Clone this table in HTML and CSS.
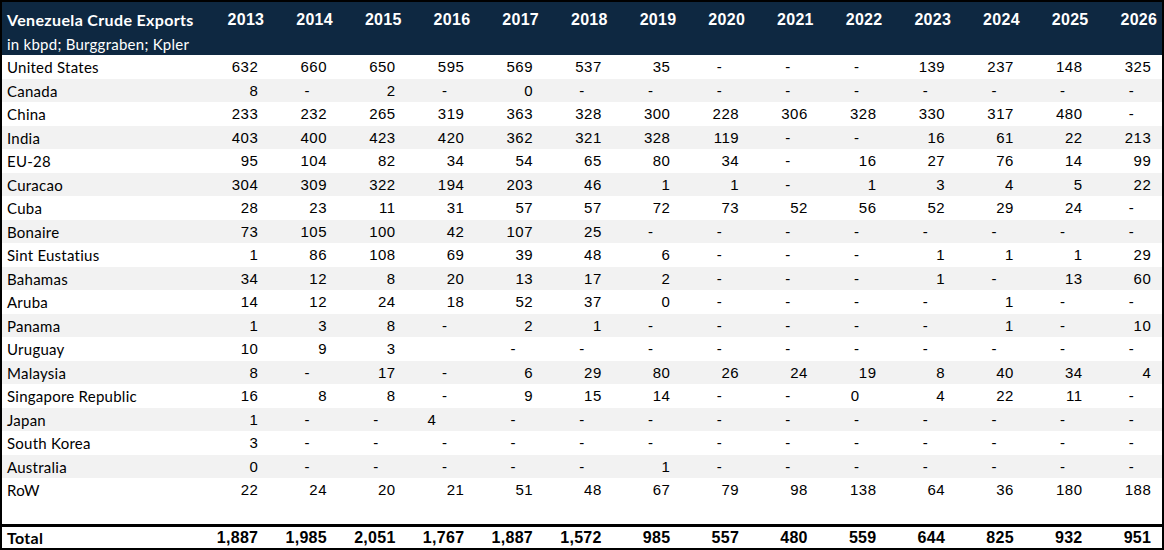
FILE: index.html
```html
<!DOCTYPE html>
<html>
<head>
<meta charset="utf-8">
<link rel="stylesheet" href="styles.css">
</head>
<body>
<div class="frame">
<table class="grid">
<colgroup>
<col class="c-label"><col span="14" class="c-year"><col class="c-pad">
</colgroup>
<thead>
<tr class="h1">
<th class="title">Venezuela Crude Exports</th>
<th>2013</th><th>2014</th><th>2015</th><th>2016</th><th>2017</th><th>2018</th><th>2019</th><th>2020</th><th>2021</th><th>2022</th><th>2023</th><th>2024</th><th>2025</th><th>2026</th><th></th>
</tr>
<tr class="h2">
<th class="sub">in kbpd; Burggraben; Kpler</th>
<th></th><th></th><th></th><th></th><th></th><th></th><th></th><th></th><th></th><th></th><th></th><th></th><th></th><th></th><th></th>
</tr>
</thead>
<tbody>
<tr><td class="lbl">United States</td><td>632</td><td>660</td><td>650</td><td>595</td><td>569</td><td>537</td><td>35</td><td class="d">-</td><td class="d">-</td><td class="d">-</td><td>139</td><td>237</td><td>148</td><td>325</td><td></td></tr>
<tr><td class="lbl">Canada</td><td>8</td><td class="d">-</td><td>2</td><td class="d">-</td><td>0</td><td class="d">-</td><td class="d">-</td><td class="d">-</td><td class="d">-</td><td class="d">-</td><td class="d">-</td><td class="d">-</td><td class="d">-</td><td class="d">-</td><td></td></tr>
<tr><td class="lbl">China</td><td>233</td><td>232</td><td>265</td><td>319</td><td>363</td><td>328</td><td>300</td><td>228</td><td>306</td><td>328</td><td>330</td><td>317</td><td>480</td><td class="d">-</td><td></td></tr>
<tr><td class="lbl">India</td><td>403</td><td>400</td><td>423</td><td>420</td><td>362</td><td>321</td><td>328</td><td>119</td><td class="d">-</td><td class="d">-</td><td>16</td><td>61</td><td>22</td><td>213</td><td></td></tr>
<tr><td class="lbl">EU-28</td><td>95</td><td>104</td><td>82</td><td>34</td><td>54</td><td>65</td><td>80</td><td>34</td><td class="d">-</td><td>16</td><td>27</td><td>76</td><td>14</td><td>99</td><td></td></tr>
<tr><td class="lbl">Curacao</td><td>304</td><td>309</td><td>322</td><td>194</td><td>203</td><td>46</td><td>1</td><td>1</td><td class="d">-</td><td>1</td><td>3</td><td>4</td><td>5</td><td>22</td><td></td></tr>
<tr><td class="lbl">Cuba</td><td>28</td><td>23</td><td>11</td><td>31</td><td>57</td><td>57</td><td>72</td><td>73</td><td>52</td><td>56</td><td>52</td><td>29</td><td>24</td><td class="d">-</td><td></td></tr>
<tr><td class="lbl">Bonaire</td><td>73</td><td>105</td><td>100</td><td>42</td><td>107</td><td>25</td><td class="d">-</td><td class="d">-</td><td class="d">-</td><td class="d">-</td><td class="d">-</td><td class="d">-</td><td class="d">-</td><td class="d">-</td><td></td></tr>
<tr><td class="lbl">Sint Eustatius</td><td>1</td><td>86</td><td>108</td><td>69</td><td>39</td><td>48</td><td>6</td><td class="d">-</td><td class="d">-</td><td class="d">-</td><td>1</td><td>1</td><td>1</td><td>29</td><td></td></tr>
<tr><td class="lbl">Bahamas</td><td>34</td><td>12</td><td>8</td><td>20</td><td>13</td><td>17</td><td>2</td><td class="d">-</td><td class="d">-</td><td class="d">-</td><td>1</td><td class="d">-</td><td>13</td><td>60</td><td></td></tr>
<tr><td class="lbl">Aruba</td><td>14</td><td>12</td><td>24</td><td>18</td><td>52</td><td>37</td><td>0</td><td class="d">-</td><td class="d">-</td><td class="d">-</td><td class="d">-</td><td>1</td><td class="d">-</td><td class="d">-</td><td></td></tr>
<tr><td class="lbl">Panama</td><td>1</td><td>3</td><td>8</td><td class="d">-</td><td>2</td><td>1</td><td class="d">-</td><td class="d">-</td><td class="d">-</td><td class="d">-</td><td class="d">-</td><td>1</td><td class="d">-</td><td>10</td><td></td></tr>
<tr><td class="lbl">Uruguay</td><td>10</td><td>9</td><td>3</td><td></td><td class="d">-</td><td class="d">-</td><td class="d">-</td><td class="d">-</td><td class="d">-</td><td class="d">-</td><td class="d">-</td><td class="d">-</td><td class="d">-</td><td class="d">-</td><td></td></tr>
<tr><td class="lbl">Malaysia</td><td>8</td><td class="d">-</td><td>17</td><td class="d">-</td><td>6</td><td>29</td><td>80</td><td>26</td><td>24</td><td>19</td><td>8</td><td>40</td><td>34</td><td>4</td><td></td></tr>
<tr><td class="lbl">Singapore Republic</td><td>16</td><td>8</td><td>8</td><td class="d">-</td><td>9</td><td>15</td><td>14</td><td class="d">-</td><td class="d">-</td><td class="d">0</td><td>4</td><td>22</td><td>11</td><td class="d">-</td><td></td></tr>
<tr><td class="lbl">Japan</td><td>1</td><td class="d">-</td><td class="d">-</td><td class="odd">4</td><td class="d">-</td><td class="d">-</td><td class="d">-</td><td class="d">-</td><td class="d">-</td><td class="d">-</td><td class="d">-</td><td class="d">-</td><td class="d">-</td><td class="d">-</td><td></td></tr>
<tr><td class="lbl">South Korea</td><td>3</td><td class="d">-</td><td class="d">-</td><td class="d">-</td><td class="d">-</td><td class="d">-</td><td class="d">-</td><td class="d">-</td><td class="d">-</td><td class="d">-</td><td class="d">-</td><td class="d">-</td><td class="d">-</td><td class="d">-</td><td></td></tr>
<tr><td class="lbl">Australia</td><td>0</td><td class="d">-</td><td class="d">-</td><td class="d">-</td><td class="d">-</td><td class="d">-</td><td>1</td><td class="d">-</td><td class="d">-</td><td class="d">-</td><td class="d">-</td><td class="d">-</td><td class="d">-</td><td class="d">-</td><td></td></tr>
<tr><td class="lbl">RoW</td><td>22</td><td>24</td><td>20</td><td>21</td><td>51</td><td>48</td><td>67</td><td>79</td><td>98</td><td>138</td><td>64</td><td>36</td><td>180</td><td>188</td><td></td></tr>
<tr class="blank"><td class="lbl"></td><td></td><td></td><td></td><td></td><td></td><td></td><td></td><td></td><td></td><td></td><td></td><td></td><td></td><td></td><td></td></tr>
</tbody>
<tfoot>
<tr class="total"><td class="lbl">Total</td><td>1,887</td><td>1,985</td><td>2,051</td><td>1,767</td><td>1,887</td><td>1,572</td><td>985</td><td>557</td><td>480</td><td>559</td><td>644</td><td>825</td><td>932</td><td>951</td><td></td></tr>
</tfoot>
</table>
</div>
</body>
</html>
```

FILE: styles.css
```css
html, body {
  margin: 0;
  padding: 0;
  background: #ffffff;
}

.frame {
  width: 1164px;
  height: 550px;
  box-sizing: border-box;
  border: 2px solid #000000;
  overflow: hidden;
  background: #ffffff;
}

.grid {
  table-layout: fixed;
  border-collapse: separate;
  border-spacing: 0;
  width: 1160px;
  font-family: "Liberation Sans", Arial, sans-serif;
  font-size: 15px;
  color: #000000;
}

.c-label { width: 195.6px; }
.c-year { width: 68.7px; }
.c-pad { width: 2.6px; }

.grid th,
.grid td {
  padding: 0;
  white-space: nowrap;
  overflow: visible;
}

.grid thead tr {
  background: #0e2841;
  color: #ffffff;
}

.grid .h1 { height: 31px; }
.grid .h2 { height: 22px; }

.grid .h1 th {
  font-weight: bold;
  font-size: 16px;
  letter-spacing: 0.3px;
  text-align: right;
  padding-right: 2px;
  padding-top: 4px;
  vertical-align: middle;
  line-height: 18px;
}

.grid .h1 th.title {
  text-align: left;
  padding-left: 5px;
  padding-right: 0;
  font-family: Lato, "Liberation Sans", sans-serif;
  font-size: 16px;
  letter-spacing: 0.35px;
}

.grid .h2 th.sub {
  text-align: left;
  padding-left: 5px;
  font-family: Lato, "Liberation Sans", sans-serif;
  font-weight: normal;
  font-size: 15px;
  letter-spacing: 0.25px;
  line-height: 18px;
  vertical-align: middle;
}

.grid tbody tr { height: 23.5px; }
.grid tbody tr:nth-child(even) { background: #f2f2f2; }
.grid tbody tr.blank { height: 22.5px; background: #ffffff; }

.grid tbody td,
.grid tfoot td {
  text-align: right;
  padding-right: 8px;
  padding-top: 1px;
  line-height: 18px;
  vertical-align: middle;
  letter-spacing: 0.5px;
}

.grid td.lbl {
  text-align: left;
  padding-left: 5px;
  padding-right: 0;
  font-family: Lato, "Liberation Sans", sans-serif;
  letter-spacing: 0.25px;
}

.grid td.d { padding-right: 25px; }
.grid td.odd { padding-right: 36px; }

.grid .total { height: 24px; }
.grid .total td {
  border-top: 3px solid #000000;
  font-weight: bold;
  font-size: 16px;
  letter-spacing: 0.3px;
}
.grid .total td.lbl {
  font-size: 16px;
  letter-spacing: 0.3px;
}
```
